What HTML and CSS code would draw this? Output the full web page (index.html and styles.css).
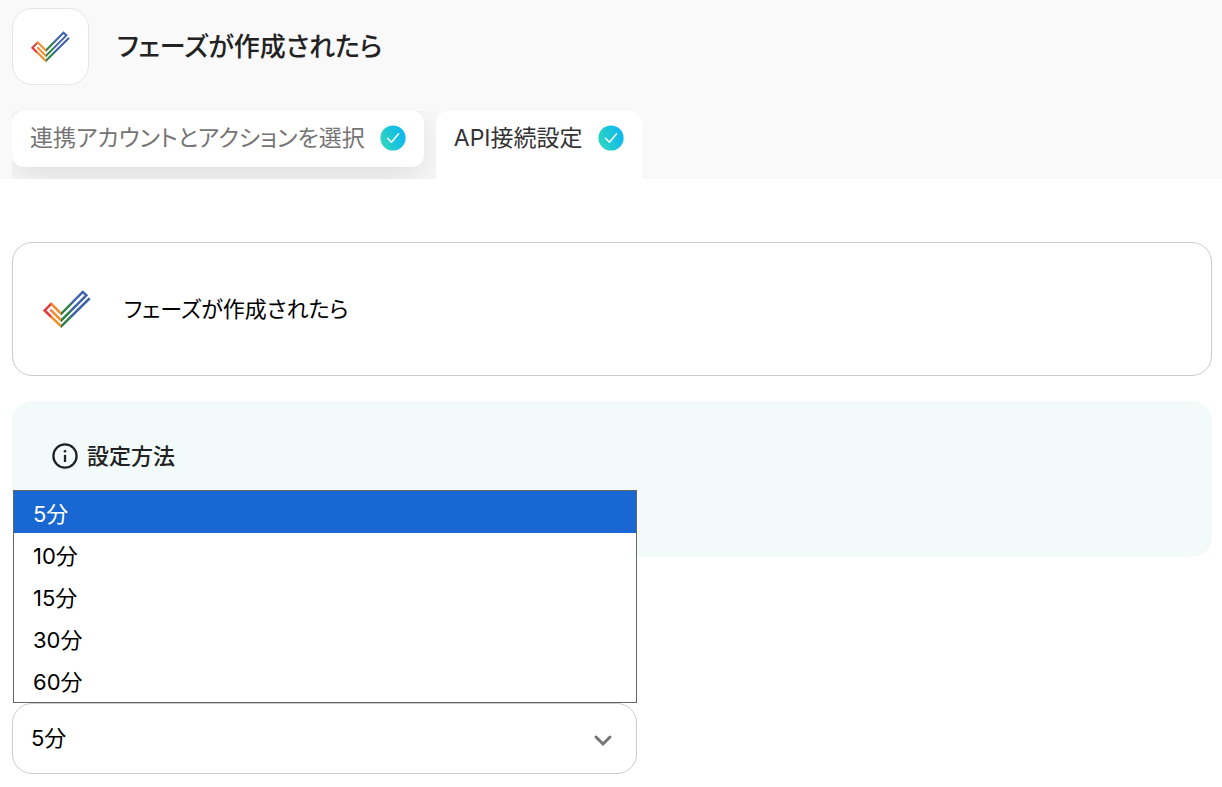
FILE: index.html
```html
<!DOCTYPE html>
<html lang="ja">
<head>
    <meta charset="UTF-8">
    <title>フェーズが作成されたら</title>
    <link rel="stylesheet" href="styles.css">
</head>
<body>
    <svg class="sprite" aria-hidden="true">
        <defs>
            <linearGradient id="logo-colors" gradientUnits="userSpaceOnUse" x1="22" y1="0" x2="170" y2="0">
                <stop offset="0.16" stop-color="#e5383b" />
                <stop offset="0.16" stop-color="#f58a2a" />
                <stop offset="0.375" stop-color="#f58a2a" />
                <stop offset="0.375" stop-color="#2c8048" />
                <stop offset="0.57" stop-color="#2c8048" />
                <stop offset="0.57" stop-color="#3f62ac" />
            </linearGradient>
            <linearGradient id="badge-colors" x1="0" y1="0.7" x2="1" y2="0.3">
                <stop offset="0" stop-color="#2ed8bd" />
                <stop offset="1" stop-color="#0cb4f2" />
            </linearGradient>
        </defs>
        <symbol id="logo" viewBox="23 29 148 116">
            <path d="M164 53L78 138L28 90L48 70L78 100L143 34L154 44L78 120L46 88" fill="none" stroke="url(#logo-colors)" stroke-width="7.5" />
        </symbol>
        <symbol id="badge" viewBox="0 0 26 26">
            <circle cx="13" cy="13" r="12.6" fill="url(#badge-colors)" />
            <path d="M7.6 13.2L11.4 17.2L18.6 8.8" fill="none" stroke="#fff" stroke-width="1.5" stroke-linecap="round" stroke-linejoin="round" />
        </symbol>
    </svg>
    <header class="header">
        <div class="title-container">
            <div class="app-icon">
                <svg class="app-logo"><use href="#logo" /></svg>
            </div>
            <h1 class="title">フェーズが作成されたら</h1>
        </div>
        <nav class="tabs">
            <button class="tab" type="button">連携アカウントとアクションを選択<svg class="badge"><use href="#badge" /></svg></button>
            <button class="tab tab-active" type="button">API接続設定<svg class="badge"><use href="#badge" /></svg></button>
        </nav>
    </header>
    <main class="content">
        <div class="card">
            <svg class="card-logo"><use href="#logo" /></svg>
            <div class="card-name">フェーズが作成されたら</div>
        </div>
        <section class="hint">
            <h2 class="hint-heading">
                <svg class="info-icon" viewBox="0 0 26 26">
                    <circle cx="13" cy="13" r="11.6" fill="none" stroke="#222" stroke-width="2.3" />
                    <circle cx="13" cy="8.3" r="1.3" fill="#222" />
                    <path d="M13 11.8V19" stroke="#222" stroke-width="2.3" />
                </svg>
                設定方法
            </h2>
        </section>
        <div class="field">
            <select class="select" id="interval" aria-label="5分">
                <option>5分</option>
                <option>10分</option>
                <option>15分</option>
                <option>30分</option>
                <option>60分</option>
            </select>
            <svg class="chevron" viewBox="0 0 20 14">
                <path d="M3 3L10 10L17 3" fill="none" stroke="#757575" stroke-width="3" stroke-linecap="round" />
            </svg>
            <ul class="options" role="listbox">
                <li class="option option-selected" role="option" aria-selected="true">5分</li>
                <li class="option" role="option">10分</li>
                <li class="option" role="option">15分</li>
                <li class="option" role="option">30分</li>
                <li class="option" role="option">60分</li>
            </ul>
        </div>
    </main>
</body>
</html>
```
FILE: styles.css
```css
* {
    box-sizing: border-box;
}
body {
    margin: 0;
    background-color: #fff;
    color: #000;
    font-family: Inter, "Noto Sans CJK JP", sans-serif;
    font-size: 22px;
    line-height: 32px;
    font-feature-settings: "palt";
}
.sprite {
    position: absolute;
    width: 0;
    height: 0;
}
.header {
    background-color: #f9f9f9;
    padding: 8px 10px 0 12px;
}
.title-container {
    display: flex;
    align-items: center;
    gap: 28px;
    margin-bottom: 26px;
}
.app-icon {
    display: flex;
    align-items: center;
    justify-content: center;
    width: 77px;
    height: 77px;
    background-color: #fff;
    border: 1px solid #e6e6e6;
    border-radius: 20px;
}
.app-logo {
    width: 40px;
    height: 32px;
}
.title {
    margin: 0;
    color: #222;
    font-size: 26px;
    font-weight: 500;
}
.tabs {
    display: flex;
    align-items: flex-start;
    gap: 12px;
    width: fit-content;
    height: 68px;
    overflow: hidden;
}
.tab {
    display: flex;
    align-items: center;
    gap: 15px;
    height: 56px;
    padding: 0 18px 2px;
    background-color: #fff;
    border: 0;
    border-radius: 12px;
    box-shadow: 0 10px 40px rgba(0, 0, 0, 0.12);
    color: #757575;
    font: inherit;
    font-size: 23px;
    font-feature-settings: inherit;
    white-space: nowrap;
}
.tab-active {
    height: 68px;
    padding-bottom: 14px;
    border-radius: 12px 12px 0 0;
    box-shadow: none;
    color: #333;
}
.badge {
    width: 26px;
    height: 26px;
}
.content {
    padding: 63px 10px 13px 12px;
}
.card {
    display: flex;
    align-items: center;
    gap: 32px;
    height: 134px;
    padding: 0 30px;
    border: 1px solid #ccc;
    border-radius: 20px;
}
.card-logo {
    width: 49px;
    height: 39px;
}
.hint {
    height: 156px;
    margin-top: 25px;
    padding: 39px 40px;
    background-color: #f2fbfa;
    border-radius: 20px;
}
.hint-heading {
    display: flex;
    align-items: center;
    gap: 9px;
    margin: 0;
    color: #222;
    font-size: 22px;
    font-weight: 500;
}
.info-icon {
    width: 26px;
    height: 26px;
}
.field {
    position: relative;
    width: 52.1%;
    margin-top: 146px;
}
.select {
    display: block;
    width: 100%;
    height: 71px;
    padding: 0 18px 2px;
    appearance: none;
    background-color: #fff;
    border: 1px solid #ccc;
    border-radius: 20px;
    color: #000;
    font: inherit;
}
.chevron {
    position: absolute;
    right: 24px;
    top: 31px;
    width: 20px;
    height: 14px;
    pointer-events: none;
}
.options {
    position: absolute;
    left: 1px;
    right: 0;
    bottom: 71px;
    margin: 0;
    padding: 0 0 1px;
    list-style: none;
    background-color: #fff;
    border: 1px solid #666;
}
.option {
    height: 42px;
    padding: 7px 19px 0;
}
.option-selected {
    background-color: #1967d2;
    color: #fff;
}
```
